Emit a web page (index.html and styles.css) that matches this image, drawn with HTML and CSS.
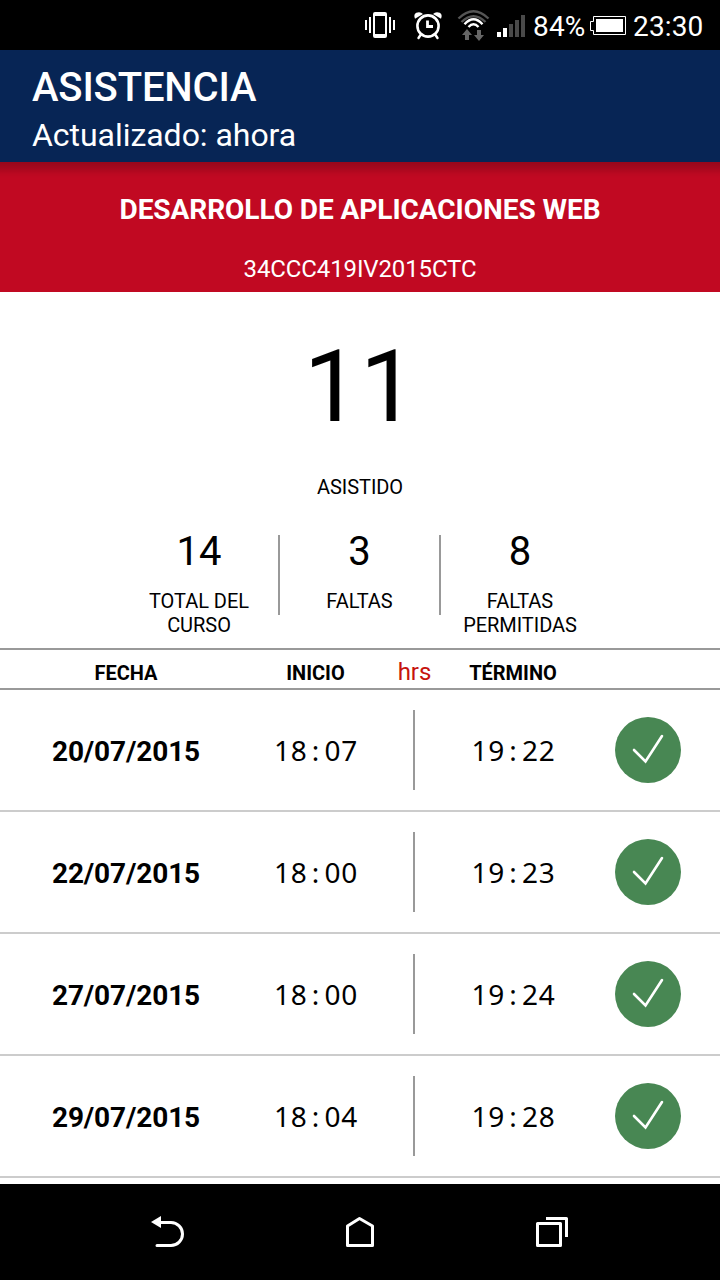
FILE: index.html
```html
<!DOCTYPE html>
<html lang="es">
<head>
<meta charset="utf-8">
<title>Asistencia</title>
<link rel="stylesheet" href="styles.css">
</head>
<body>
<div class="screen">
  <div class="status-bar">
    <svg class="status-icons" width="180" height="50" viewBox="350 0 180 50">
      <!-- vibrate -->
      <path fill="#fff" fill-rule="evenodd" d="M375 12h10q2 0 2 2v22q0 2-2 2h-10q-2 0-2-2V14q0-2 2-2zM375 16v18h10V16z"/>
      <path fill="#fff" d="M365 20h2v10h-2zM369 17h2v16h-2zM389 17h2v16h-2zM393 20h2v10h-2z"/>
      <!-- alarm -->
      <circle cx="428" cy="26" r="10.6" fill="none" stroke="#fff" stroke-width="2.6"/>
      <path d="M427.5 20.500v6h5.500" fill="none" stroke="#fff" stroke-width="2.8"/>
      <path d="M420.500 35l-2 3M435.500 35l2 3" stroke="#fff" stroke-width="2.400" stroke-linecap="round"/>
      <path fill="#fff" d="M415 18.800q-1.800-4.300 1.300-6 4-1.500 6.700 1.200zM441 18.800q1.800-4.300-1.300-6-4-1.500-6.700 1.200z"/>
      <!-- wifi -->
      <g fill="none" stroke-width="2.400">
        <path stroke="#555" d="M458.500 18.500q15-14.500 30 0M461.500 22q12-11.500 24 0"/>
        <path stroke="#fff" d="M464.500 24.200q9-10 18 0M468.500 27q5-5.500 10 0"/>
      </g>
      <path fill="#666" d="M467 29l5 6h-3v5h-4v-5h-3zM479 41l-5-6h3v-5h4v5h3z"/>
      <!-- signal -->
      <path fill="#fff" d="M497 32h4v5h-4zM503 28h4v9h-4z"/>
      <path fill="#4a4a4a" d="M509 24h4v13h-4zM515 20h4v17h-4zM521 15h4v22h-4z"/>
    </svg>
    <span class="battery-level">84%</span>
    <svg class="battery" width="38" height="22" viewBox="589 14 38 22">
      <path fill="none" stroke="#fff" d="M593.500 16.500h32v18h-32v-4h-3v-9h3z"/>
      <path fill="#fff" d="M596 19h27v13h-27z"/>
    </svg>
    <span class="clock">23:30</span>
  </div>

  <header class="app-bar">
    <h1 class="title">ASISTENCIA</h1>
    <p class="subtitle">Actualizado: ahora</p>
  </header>

  <main class="content">
    <section class="course">
      <h2 class="course-name">DESARROLLO DE APLICACIONES WEB</h2>
      <p class="course-code">34CCC419IV2015CTC</p>
    </section>

    <section class="summary">
      <div class="attended">11</div>
      <div class="label">ASISTIDO</div>
      <div class="stats">
        <div><div class="number">14</div><div class="label">TOTAL DEL<br>CURSO</div></div>
        <i class="stat-divider"></i>
        <div><div class="number">3</div><div class="label">FALTAS</div></div>
        <i class="stat-divider"></i>
        <div><div class="number">8</div><div class="label">FALTAS<br>PERMITIDAS</div></div>
      </div>
    </section>

    <section>
      <div class="columns table-head">
        <span>FECHA</span><span>INICIO</span><span class="hours">hrs</span><span>TÉRMINO</span>
      </div>
      <div class="columns row">
        <b>20/07/2015</b>
        <span class="time">18<i>:</i>07</span><i class="divider"></i><span class="time">19<i>:</i>22</span>
        <svg class="check" viewBox="0 0 66 66"><circle cx="33" cy="33" r="33"/><path d="M19 33l11.500 11.500L47 19"/></svg>
      </div>
      <div class="columns row">
        <b>22/07/2015</b>
        <span class="time">18<i>:</i>00</span><i class="divider"></i><span class="time">19<i>:</i>23</span>
        <svg class="check" viewBox="0 0 66 66"><circle cx="33" cy="33" r="33"/><path d="M19 33l11.500 11.500L47 19"/></svg>
      </div>
      <div class="columns row">
        <b>27/07/2015</b>
        <span class="time">18<i>:</i>00</span><i class="divider"></i><span class="time">19<i>:</i>24</span>
        <svg class="check" viewBox="0 0 66 66"><circle cx="33" cy="33" r="33"/><path d="M19 33l11.500 11.500L47 19"/></svg>
      </div>
      <div class="columns row">
        <b>29/07/2015</b>
        <span class="time">18<i>:</i>04</span><i class="divider"></i><span class="time">19<i>:</i>28</span>
        <svg class="check" viewBox="0 0 66 66"><circle cx="33" cy="33" r="33"/><path d="M19 33l11.500 11.500L47 19"/></svg>
      </div>
    </section>
  </main>

  <nav class="nav-bar">
    <svg width="48" height="48" viewBox="144 1208 48 48">
      <path fill="#fff" d="M151 1222l10-6v12z"/>
      <path fill="none" stroke="#fff" stroke-width="3" stroke-linecap="round" d="M160 1222.500h11a11.500 11.500 0 0 1 0 23h-14"/>
    </svg>
    <svg width="48" height="48" viewBox="336 1208 48 48">
      <path fill="none" stroke="#fff" stroke-width="3" stroke-linejoin="round" d="M347.500 1245.500v-19.500l12-7.500 13 7.500v19.500z"/>
    </svg>
    <svg width="48" height="48" viewBox="528 1208 48 48">
      <path fill="none" stroke="#fff" stroke-width="3" stroke-linejoin="round" d="M537.500 1223.500h23v22h-23zM546 1218.500h20.500v18.500"/>
    </svg>
  </nav>
</div>
</body>
</html>
```

FILE: styles.css
```css
* { box-sizing: border-box; }

body, h1, h2, p { margin: 0; }

body {
  background: #fff;
  color: #000;
  font-family: Roboto, sans-serif;
}

i { font-style: normal; }

.screen {
  display: flex;
  flex-direction: column;
  width: 720px;
  height: 1280px;
  overflow: hidden;
}

.status-bar {
  display: flex;
  flex: none;
  align-items: center;
  height: 50px;
  padding-left: 350px;
  background: #000;
  color: #fff;
  font-size: 28px;
  line-height: 46px;
  white-space: nowrap;
}

.status-icons { flex: none; }
.battery-level { width: 56px; margin-left: 3px; padding-top: 4px; letter-spacing: .15px; }
.battery { flex: none; }
.clock { margin-left: 6px; padding-top: 4px; letter-spacing: .15px; }

.app-bar {
  position: relative;
  flex: none;
  height: 112px;
  padding: 14px 32px 0;
  background: #072555;
  color: #fff;
}

/* Shadow cast by the bar on the content below */
.app-bar::after {
  content: "";
  position: absolute;
  top: 100%;
  left: 0;
  width: 100%;
  height: 16px;
  background: linear-gradient(rgba(0, 0, 0, .22), rgba(0, 0, 0, .15) 35%, rgba(0, 0, 0, .03) 75%, transparent);
}

.title { font-size: 40px; font-weight: 500; line-height: 48px; letter-spacing: -.15px; }
.subtitle { margin-top: -1px; font-size: 32px; line-height: 48px; letter-spacing: -.04px; }

.content {
  flex: 1;
  min-height: 0;
  overflow: hidden;
}

.course {
  height: 130px;
  padding-top: 32px;
  background: #c10922;
  color: #fff;
  text-align: center;
}

.course-name { margin-bottom: 29px; font-size: 28px; font-weight: 700; line-height: 32px; letter-spacing: -.05px; }
.course-code { font-size: 24px; line-height: 28px; letter-spacing: -.12px; }

.summary {
  height: 356px;
  padding-top: 36px;
  text-align: center;
}

.attended { margin-bottom: 29px; font-size: 100px; line-height: 118px; }
.label { font-size: 20px; line-height: 24px; letter-spacing: -.04px; }

.stats {
  display: grid;
  grid-template-columns: 158px 2px 159px 2px 158px;
  margin: 28px 0 0 120px;
}

.number { margin-bottom: 13px; padding-top: 1px; font-size: 40px; line-height: 48px; }
.stat-divider { height: 80px; margin-top: 8px; background: #999; }

.columns {
  display: grid;
  grid-template-columns: 252px 127px 71px 126px 144px;
  justify-items: center;
}

.table-head {
  align-items: baseline;
  height: 42px;
  padding-top: 7px;
  border: solid #999;
  border-width: 2px 0;
  font-size: 20px;
  font-weight: 700;
  line-height: 30px;
}

.hours { color: #c6130c; font-size: 24px; font-weight: 400; }

.row {
  align-items: center;
  height: 122px;
  border-bottom: 2px solid #ccc;
  font-size: 28px;
  line-height: 36px;
}

.row b { padding-top: 3px; letter-spacing: -.12px; }

.time {
  padding-left: 1px;
  font-family: "Noto Sans", sans-serif;
  letter-spacing: .8px;
}

.time i { display: inline-block; width: 16.8px; text-align: center; }
.divider { width: 2px; height: 80px; margin-right: 1px; background: #999; }

.check { width: 66px; height: 66px; }
.check circle { fill: #488753; }
.check path { fill: none; stroke: #fff; stroke-width: 2.6; stroke-linecap: round; }

.nav-bar {
  display: grid;
  flex: none;
  grid-template-columns: repeat(3, 192px);
  place-content: center;
  place-items: center;
  height: 96px;
  background: #000;
}
```
